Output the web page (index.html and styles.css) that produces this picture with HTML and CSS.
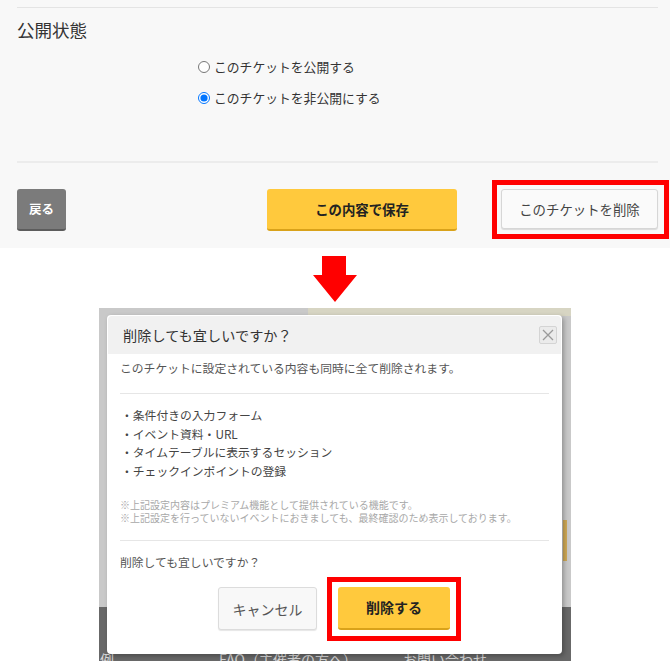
FILE: index.html
```html
<!DOCTYPE html>
<html lang="ja">
<head>
<meta charset="utf-8">
<title>チケット削除</title>
<link rel="stylesheet" href="styles.css">
</head>
<body>
<div class="page">
  <section class="top">
    <div class="rule rule-top"></div>
    <h2 class="section-title">公開状態</h2>
    <div class="radios">
      <label class="radio-row"><input type="radio" name="pub"><span>このチケットを公開する</span></label>
      <label class="radio-row"><input type="radio" name="pub" checked><span>このチケットを非公開にする</span></label>
    </div>
    <div class="rule rule-mid"></div>
    <div class="actions">
      <button class="btn btn-back">戻る</button>
      <button class="btn btn-save">この内容で保存</button>
      <div class="mark mark-top"><button class="btn btn-remove">このチケットを削除</button></div>
    </div>
  </section>

  <svg class="arrow" width="44" height="46" viewBox="0 0 44 46"><polygon points="9,0 33,0 33,19 44,19 22,46 0,19 9,19" fill="#ff0000"/></svg>

  <section class="shot">
    <div class="under-footer">
      <span class="fl fl-1">例</span>
      <span class="fl fl-2">FAQ（主催者の方へ）</span>
      <span class="fl fl-3">お問い合わせ</span>
    </div>
    <div class="dialog">
      <div class="dialog-head">
        <span class="dialog-title">削除しても宜しいですか？</span>
        <span class="close"><svg width="12" height="12" viewBox="0 0 12 12"><path d="M1 1 L11 11 M11 1 L1 11" stroke="#9a9a9a" stroke-width="1.3" fill="none"/></svg></span>
      </div>
      <div class="dialog-body">
        <p class="lead">このチケットに設定されている内容も同時に全て削除されます。</p>
        <div class="drule"></div>
        <ul class="items">
          <li>・条件付きの入力フォーム</li>
          <li>・イベント資料・URL</li>
          <li>・タイムテーブルに表示するセッション</li>
          <li>・チェックインポイントの登録</li>
        </ul>
        <p class="notes">※上記設定内容はプレミアム機能として提供されている機能です。<br>※上記設定を行っていないイベントにおきましても、最終確認のため表示しております。</p>
        <div class="drule drule-2"></div>
        <p class="question">削除しても宜しいですか？</p>
        <div class="dialog-actions">
          <button class="dbtn dbtn-cancel">キャンセル</button>
          <div class="mark mark-dialog"><button class="dbtn dbtn-delete">削除する</button></div>
        </div>
      </div>
    </div>
  </section>
</div>
</body>
</html>
```
FILE: styles.css
```css
* { box-sizing: border-box; }
html, body { margin: 0; padding: 0; background: #fff; }
body {
  font-family: "Noto Sans CJK JP", "Noto Sans", "Liberation Sans", sans-serif;
  color: #333;
  width: 670px;
  height: 661px;
  overflow: hidden;
}
.page { display: flex; flex-direction: column; align-items: center; }

/* top panel */
.top {
  align-self: stretch;
  height: 248px;
  background: #f8f8f8;
  padding: 0 0 0 17px;
  display: flex;
  flex-direction: column;
}
.rule { border-top: 1px solid #e4e4e4; margin-right: 12px; }
.rule-top { margin-top: 7px; }
.section-title {
  margin: 10px 0 0;
  font-size: 17.5px;
  font-weight: normal;
  line-height: 24px;
  color: #333;
}
.radios {
  margin-top: 15px;
  padding-left: 181px;
  display: flex;
  flex-direction: column;
  gap: 11px;
}
.radio-row {
  display: flex;
  align-items: center;
  gap: 4px;
  font-size: 12.8px;
  line-height: 20px;
  color: #333;
}
.radio-row input { margin: 0; width: 12px; height: 12px; flex: none; }
.rule-mid { margin-top: 53px; border-top-width: 2px; border-color: #ececec; }
.actions {
  margin-top: 17px;
  display: flex;
  align-items: center;
}
.actions > * { flex: none; }
.btn {
  font-family: inherit;
  border: 0;
  border-radius: 3px;
  cursor: pointer;
  padding: 0;
}
.btn-back {
  width: 49px;
  height: 42px;
  background: #7b7b7b;
  border-bottom: 2px solid #5c5c5c;
  color: #fff;
  font-weight: bold;
  font-size: 12.5px;
}
.btn-save {
  margin-left: 201px;
  width: 190px;
  height: 42px;
  background: #ffc93d;
  border-bottom: 2px solid #d9a21a;
  color: #222;
  font-weight: bold;
  font-size: 13.4px;
}
.mark { border: 5px solid #ff0000; display: flex; }
.mark-top { margin-left: 35px; padding: 4px 6px 5px 4px; }
.btn-remove {
  width: 157px;
  height: 40px;
  background: #fafafa;
  border: 1px solid #d6d6d6;
  box-shadow: 0 1px 1px rgba(0,0,0,0.12);
  color: #444;
  font-size: 13.4px;
}

/* arrow */
.arrow { display: block; margin-top: 8px; }

/* dialog screenshot */
.shot {
  margin-top: 6px;
  width: 472px;
  height: 353px;
  position: relative;
  overflow: hidden;
  background:
    linear-gradient(#d7d5c3, #d7d5c3) no-repeat 209px 0 / 263px 8px,
    linear-gradient(#cfa956, #cfa956) no-repeat 464px 212px / 4px 41px,
    #c9c9c9;
}
.under-footer {
  margin-top: 299px;
  height: 54px;
  background: #686868;
  padding-top: 42px;
  display: flex;
  font-size: 14px;
  line-height: 20px;
  color: #d6d6d6;
  white-space: nowrap;
}
.fl-1 { margin-left: 1px; width: 119px; }
.fl-2 { width: 184px; }
.dialog {
  position: absolute;
  top: 7px;
  left: 8px;
  width: 455px;
  height: 339px;
  background: #fff;
  border-radius: 4px;
  box-shadow: 2px 2px 5px rgba(0,0,0,0.28);
  padding-top: 1px;
}
.dialog-head {
  margin: 0 1px;
  height: 38px;
  background: #f1f1f1;
  border-radius: 4px 4px 0 0;
  display: flex;
  align-items: center;
  justify-content: space-between;
  padding: 0 4px 0 15px;
}
.dialog-title { font-size: 14.2px; color: #333; }
.close {
  width: 18px;
  height: 18px;
  border: 1px solid #d4d4d4;
  border-radius: 2px;
  background: #ebebeb;
  display: flex;
  align-items: center;
  justify-content: center;
}
.dialog-body { padding: 5px 13px 0; }
.lead { margin: 0; font-size: 11.8px; line-height: 18px; color: #555; white-space: nowrap; }
.drule { margin-top: 16px; border-top: 1px solid #e6e6e6; }
.items {
  list-style: none;
  margin: 12px 0 0;
  padding: 0 0 0 1px;
  font-size: 11.8px;
  line-height: 18.7px;
  color: #444;
}
.notes {
  margin: 17px 0 0;
  font-size: 10px;
  line-height: 13px;
  color: #a8a8a8;
  white-space: nowrap;
}
.drule-2 { margin-top: 16px; }
.question { margin: 13px 0 0; font-size: 11.8px; line-height: 16px; color: #555; }
.dialog-actions {
  margin-top: 7px;
  display: flex;
  justify-content: center;
  align-items: center;
  gap: 10px;
  padding-left: 10px;
}
.dbtn { font-family: inherit; cursor: pointer; border-radius: 3px; padding: 0; }
.dbtn-cancel {
  width: 99px;
  height: 43px;
  background: #f8f8f8;
  border: 1px solid #dcdcdc;
  box-shadow: 0 1px 1px rgba(0,0,0,0.1);
  color: #555;
  font-size: 14px;
}
.mark-dialog { padding: 5px 6px 6px 6px; }
.dbtn-delete {
  width: 112px;
  height: 43px;
  background: #ffc93d;
  border: 0;
  border-bottom: 2px solid #d9a21a;
  color: #222;
  font-weight: bold;
  font-size: 14px;
}
```
